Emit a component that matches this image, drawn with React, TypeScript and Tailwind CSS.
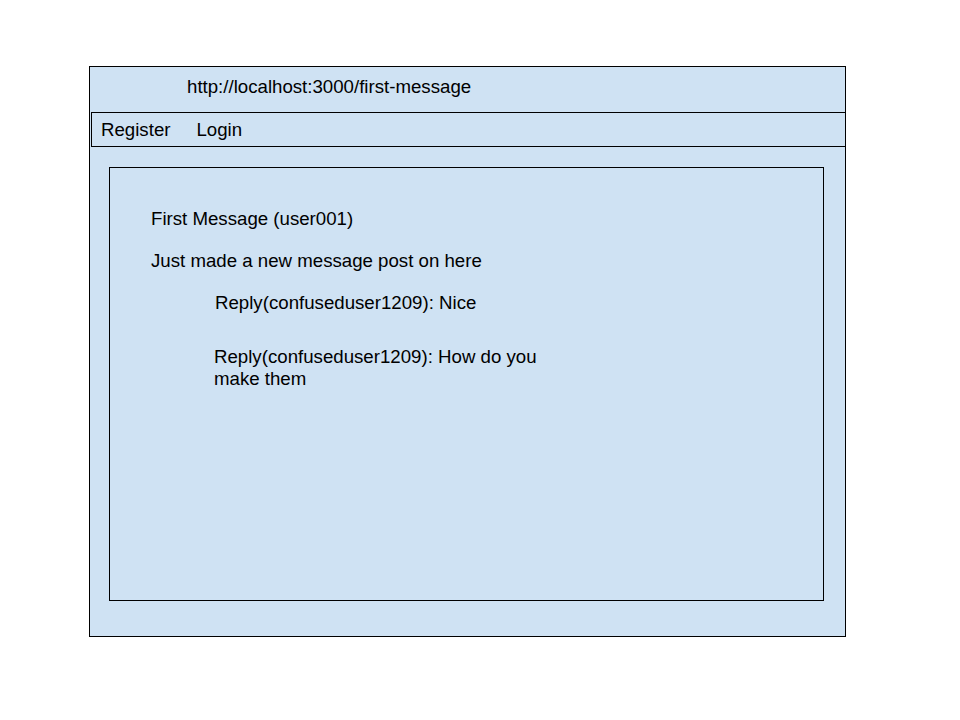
import React from 'react';

const replies = [
  { user: 'confuseduser1209', text: 'Nice' },
  { user: 'confuseduser1209', text: 'How do you make them' },
];

const App: React.FC = () => {
  return (
    <div className="min-h-[720px] w-[960px] bg-white pl-[89px] pt-[66px] font-['Liberation_Sans',Arial,sans-serif] text-[18.67px] leading-[22px] text-black">
      <div className="flex h-[571px] w-[757px] flex-col border border-black bg-[#cfe2f3]">
        <div className="h-[45px] pl-[97px] pt-[9px]">http://localhost:3000/first-message</div>

        <nav className="-mr-px ml-px flex h-[35px] items-center gap-[26px] border border-black pl-[9px]">
          <span>Register</span>
          <span>Login</span>
        </nav>

        <div className="ml-[19px] mt-[20px] h-[434px] w-[715px] border border-black pl-[41px] pt-[40px]">
          <p>First Message (user001)</p>
          <p className="mt-[20px]">Just made a new message post on here</p>

          <div className="mt-[20px] flex flex-col gap-[32px] pl-[64px]">
            {replies.map((reply, i) => (
              <p key={i} className={`max-w-[340px] ${i === 1 ? '-ml-px' : ''}`}>
                Reply({reply.user}): {reply.text}
              </p>
            ))}
          </div>
        </div>
      </div>
    </div>
  );
};

export default App;
